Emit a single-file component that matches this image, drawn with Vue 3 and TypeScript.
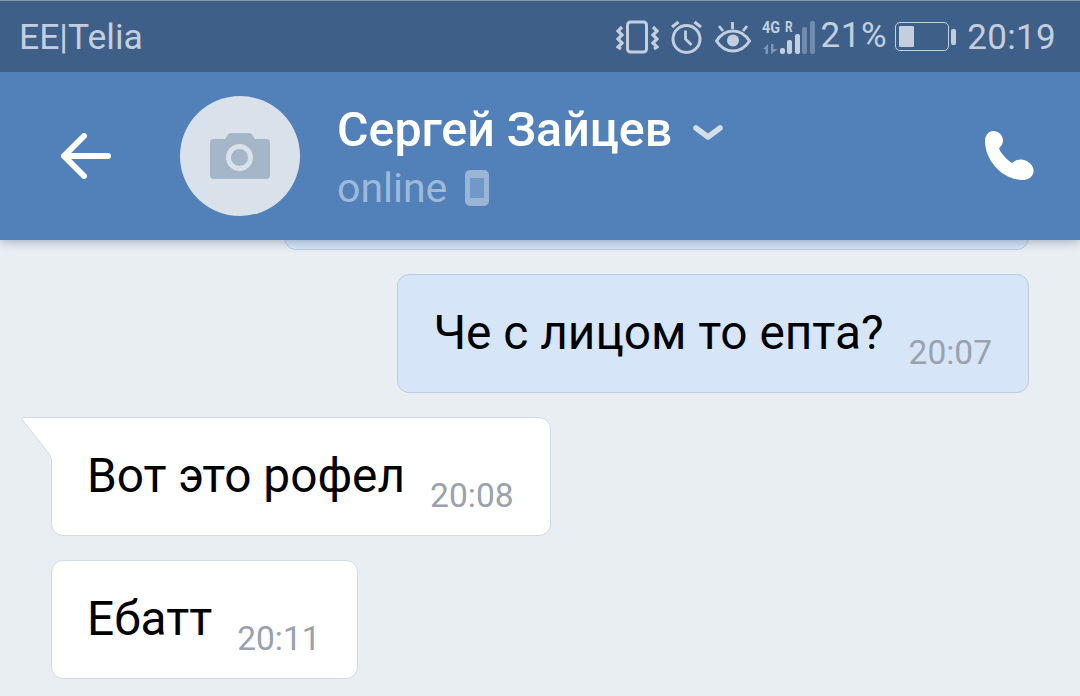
<script setup lang="ts">
interface Message {
  id: number
  text: string
  time: string
  mine: boolean
  tail?: boolean
}

const messages: Message[] = [
  { id: 1, text: "Че с лицом то епта?", time: "20:07", mine: true },
  { id: 2, text: "Вот это рофел", time: "20:08", mine: false, tail: true },
  { id: 3, text: "Ебатт", time: "20:11", mine: false },
]

const signalBars = [
  { height: 6, off: false },
  { height: 14, off: false },
  { height: 20, off: false },
  { height: 27, off: true },
  { height: 33, off: true },
]
</script>

<template>
  <div class="screen">
    <div class="status-bar">
      <span class="carrier">EE|Telia</span>
      <div class="status-right">
        <svg width="43" height="34" viewBox="0 0 43 34" fill="none" stroke="#c3cfdf">
          <rect x="11.500" y="2" width="19" height="30" rx="3" stroke-width="3" />
          <path d="M6 7 2 11l4 4-4 4 4 4-4 4 3 2" stroke-width="3.200" />
          <path d="M37 7l4 4-4 4 4 4-4 4 4 4-3 2" stroke-width="3.200" />
        </svg>
        <svg class="ic-alarm" width="33" height="34" viewBox="0 0 33 34" fill="none" stroke="#c3cfdf">
          <circle cx="16.500" cy="19" r="13.500" stroke-width="3" />
          <path d="M15.500 10.500V19l6 6" stroke-width="2.800" />
          <path d="M2 7l6.500-5M31 7l-6.500-5" stroke-width="3.200" />
        </svg>
        <svg class="ic-eye" width="36" height="32" viewBox="0 0 36 32" fill="none" stroke="#c3cfdf">
          <path d="M1.500 20C6 13 11.500 10 18 10s12 3 16.500 10C30 27 24.500 30 18 30S6 27 1.500 20Z" stroke-width="3" />
          <circle cx="18" cy="19.500" r="6" fill="#c3cfdf" stroke="none" />
          <path d="M17.500 1v7M4 5l4 5M32 5l-4 5" stroke-width="2.800" />
        </svg>
        <div class="signal">
          <div class="signal-labels">
            <span class="net">4G</span>
            <span class="net net-r">R</span>
            <svg class="arrows" width="18" height="10" viewBox="0 0 18 10" fill="#7b95b5">
              <path d="M5 0v10H2.500V5H0Z" />
              <path d="M8 0h2.500v5H15l-7 5Z" />
            </svg>
          </div>
          <div class="bars">
            <i
              v-for="(b, i) in signalBars"
              :key="i"
              class="bar"
              :class="{ 'bar-off': b.off }"
              :style="{ height: b.height + 'px' }"
            ></i>
          </div>
        </div>
        <span class="percent">21%</span>
        <div class="battery">
          <div class="battery-body"><div class="battery-fill"></div></div>
          <div class="battery-cap"></div>
        </div>
        <span class="clock">20:19</span>
      </div>
    </div>

    <header class="header">
      <svg class="back" width="50" height="46" viewBox="0 0 50 46" fill="none" stroke="#fff" stroke-width="6" stroke-linecap="round" stroke-linejoin="round">
        <path d="M3 23h44M23 3 3 23l20 20" />
      </svg>
      <div class="avatar">
        <svg width="60" height="46" viewBox="0 0 60 46">
          <path fill="#a5b6c8" d="M3.500 6H15l3-4.500C18.700.6 19.600 0 21 0h18c1.400 0 2.300.6 3 1.500L45 6h11.500C58.400 6 60 7.600 60 9.500v33c0 1.900-1.600 3.500-3.500 3.500h-53C1.600 46 0 44.400 0 42.500v-33C0 7.600 1.600 6 3.500 6Z" />
          <circle cx="29.500" cy="24.500" r="11" fill="none" stroke="#d9e2ea" stroke-width="5" />
        </svg>
      </div>
      <div class="who">
        <div class="name-row">
          <span class="name">Сергей Зайцев</span>
          <svg class="chevron" width="30" height="18" viewBox="0 0 30 18" fill="none" stroke="#d3deeb" stroke-width="5.500" stroke-linecap="round" stroke-linejoin="round">
            <path d="M3 4l12 9 12-9" />
          </svg>
        </div>
        <div class="online-row">
          <span class="online">online</span>
          <span class="phone-badge"></span>
        </div>
      </div>
      <svg class="call" width="52" height="52" viewBox="0 0 52 52">
        <path fill="#fff" d="M1 11C1 5 5 1 9.500 1c4.500 0 9 3.500 9.500 9 .3 3-1.500 5.500-4 8.500 2 5 7.500 11 13 14.500 3-2.500 6.500-4 10-3.500 5 .7 10.500 4.500 11.500 10 .8 5-3.500 10.500-10.500 10.500C18 50 1 30 1 11Z" />
      </svg>
    </header>

    <main class="thread">
      <div class="bubble mine clipped"></div>
      <div
        v-for="m in messages"
        :key="m.id"
        class="bubble"
        :class="{ mine: m.mine, tailed: m.tail }"
      >
        <svg v-if="m.tail" class="tail" width="33" height="50" viewBox="0 0 33 50">
          <path fill="#fff" stroke="#d3d9e2" d="M32 .5H3C1.500.5.700 1.800 1.500 3L25 33c3 4 5.500 7 7 15Z" />
          <path fill="#fff" d="M31 1.500h2v49h-2Z" />
        </svg>
        <span class="text">{{ m.text }}</span>
        <span class="time">{{ m.time }}</span>
      </div>
    </main>
  </div>
</template>

<style>
body {
  margin: 0;
  background: #e9eef3;
}
</style>

<style scoped>
.screen {
  width: 1080px;
  height: 696px;
  display: flex;
  flex-direction: column;
  overflow: hidden;
  background: #e9eef3;
  font-family: Roboto, sans-serif;
}

.status-bar {
  height: 72px;
  flex: none;
  box-sizing: border-box;
  display: flex;
  align-items: center;
  justify-content: space-between;
  padding: 0 24px 0 19px;
  border-top: 1px solid #7f95b1;
  background: #3e5f88;
  color: #c3cfdf;
  position: relative;
  z-index: 3;
}

.carrier {
  font-size: 35.500px;
  line-height: 1;
  margin-top: 2px;
}

.status-right {
  display: flex;
  align-items: center;
}

.ic-alarm {
  margin-left: 11px;
}

.ic-eye {
  margin-left: 12px;
}

.signal {
  display: flex;
  align-items: flex-end;
  margin-left: 11px;
  height: 33px;
  margin-top: 2px;
}

.signal-labels {
  width: 18px;
  height: 33px;
  position: relative;
}

.net {
  position: absolute;
  left: 0;
  top: -1px;
  font-size: 17px;
  font-weight: 700;
  line-height: 15px;
  transform: scaleX(0.85);
  transform-origin: left center;
}

.net-r {
  left: 23px;
  font-size: 14px;
}

.arrows {
  position: absolute;
  left: 1px;
  bottom: 0;
}

.bars {
  display: flex;
  align-items: flex-end;
  gap: 2.500px;
}

.bar {
  display: block;
  width: 5px;
  border-radius: 2px;
  background: #c3cfdf;
}

.bar-off {
  background: #6f8cae;
}

.percent {
  font-size: 35px;
  line-height: 1;
  margin-left: 6px;
  margin-top: -2px;
  letter-spacing: 0.6px;
}

.battery {
  display: flex;
  align-items: center;
  margin-left: 8px;
}

.battery-body {
  width: 54px;
  height: 29px;
  box-sizing: border-box;
  border: 1.500px solid #c3cfdf;
  border-radius: 5px;
  padding: 3px;
}

.battery-fill {
  width: 15px;
  height: 100%;
  background: #c3cfdf;
  border-radius: 1px;
}

.battery-cap {
  width: 5px;
  height: 16px;
  margin-left: 2px;
  border-radius: 2px;
  background: #c3cfdf;
}

.clock {
  font-size: 35px;
  line-height: 1;
  margin-left: 11px;
  margin-top: 2px;
  letter-spacing: 0.3px;
}

.header {
  height: 168px;
  flex: none;
  box-sizing: border-box;
  display: flex;
  align-items: center;
  padding: 0 44px 0 61px;
  background: #5181b8;
  box-shadow: 0 2px 10px rgba(40, 60, 90, 0.35);
  position: relative;
  z-index: 2;
}

.avatar {
  width: 120px;
  height: 120px;
  flex: none;
  margin-left: 69px;
  border-radius: 50%;
  background: #d9e2ea;
  display: flex;
  align-items: center;
  justify-content: center;
}

.who {
  margin-left: 37px;
  padding-top: 2px;
  flex: 1;
  color: #fff;
}

.name-row {
  display: flex;
  align-items: center;
  gap: 21px;
}

.name {
  font-size: 48.300px;
  font-weight: 500;
  line-height: 60px;
}

.chevron {
  margin-top: 6px;
}

.online-row {
  display: flex;
  align-items: center;
  gap: 18px;
  margin-top: 2px;
}

.online {
  font-size: 41px;
  line-height: 52px;
  color: #9fb9d8;
}

.phone-badge {
  width: 24px;
  height: 36px;
  box-sizing: border-box;
  border-style: solid;
  border-color: #9ab5d7;
  border-width: 8px 5px;
  border-radius: 5px;
  background: #7098c8;
}

.call {
  flex: none;
}

.thread {
  flex: 1;
  min-height: 0;
  display: flex;
  flex-direction: column;
  align-items: flex-start;
  gap: 24px;
  padding: 0 51px;
  margin-top: -109px;
}

.bubble {
  display: flex;
  align-items: flex-end;
  gap: 25px;
  box-sizing: border-box;
  height: 119px;
  padding: 0 36px 29px 35px;
  border: 1px solid #d3d9e2;
  border-radius: 12px;
  background: #fff;
  position: relative;
  flex: none;
}

.bubble.mine {
  align-self: flex-end;
  background: #d6e6f8;
  border-color: #bccbde;
}

.clipped {
  width: 745px;
}

.tailed {
  border-top-left-radius: 0;
}

.tail {
  position: absolute;
  left: -31px;
  top: -1px;
}

.text {
  font-size: 47.800px;
  line-height: 60px;
  color: #000;
}

.time {
  font-size: 33.500px;
  line-height: 38px;
  color: #99a2ad;
  margin-bottom: -9px;
}
</style>
